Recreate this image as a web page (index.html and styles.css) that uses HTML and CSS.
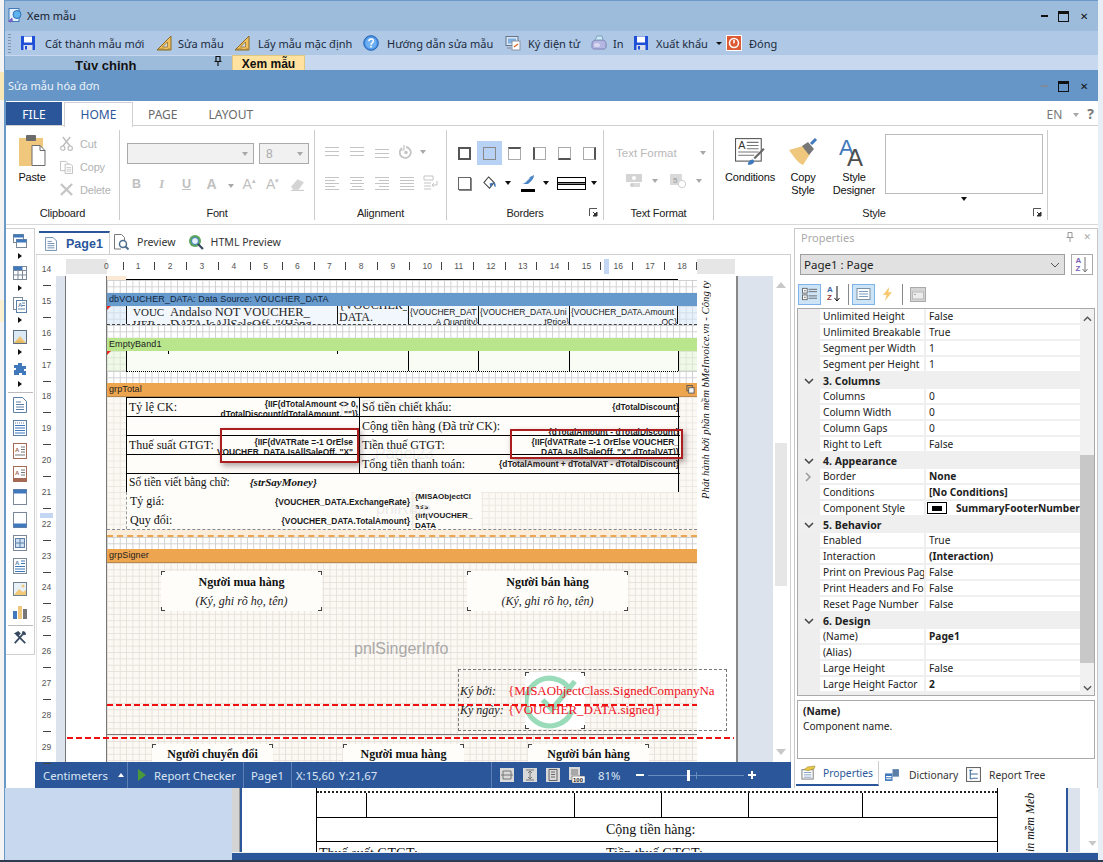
FILE: index.html
```html
<!DOCTYPE html>
<html lang="vi">
<head>
<meta charset="utf-8">
<title>Sửa mẫu hóa đơn</title>
<link rel="stylesheet" href="styles.css">
</head>
<body>
<svg class="defs" width="0" height="0" aria-hidden="true">
  <defs>
    <symbol id="i-save" viewBox="0 0 16 16"><rect x="1" y="1" width="14" height="14" fill="#1f4fd6"/><rect x="4" y="1.500" width="8" height="6" fill="#fff"/><rect x="3.500" y="10" width="9" height="5" fill="#d9dfe9"/><rect x="5" y="11" width="2" height="3.500" fill="#1f4fd6"/></symbol>
    <symbol id="i-ruler" viewBox="0 0 16 16"><path d="M15 1v14H1z" fill="#f0c060" stroke="#8a6a25"/><path d="M11.500 7v5H6.500z" fill="#cfdcec" stroke="#8a6a25" stroke-width=".7"/><path d="M3 15v-2M5 15v-2M7 15v-2M9 15v-1M11 15v-1M13 15v-2" stroke="#8a6a25" stroke-width=".7"/></symbol>
    <symbol id="i-help" viewBox="0 0 16 16"><circle cx="8" cy="8" r="7.300" fill="#4b93e6" stroke="#2565b4"/><circle cx="8" cy="8" r="5.500" fill="#6fb0f2"/><path d="M5.800 6.200c.2-3 4.600-3 4.600-.2 0 1.900-2.400 1.900-2.400 3.700" fill="none" stroke="#fff" stroke-width="1.500"/><rect x="7.200" y="10.800" width="1.600" height="1.700" fill="#fff"/></symbol>
    <symbol id="i-sign" viewBox="0 0 16 16"><rect x="1" y="1.500" width="12" height="9" fill="#dbe6f2" stroke="#63758c"/><rect x="3" y="3.500" width="8" height="5" fill="#7fb0e0"/><rect x="7" y="6" width="8" height="9" fill="#fff" stroke="#8794a6"/><path d="M9 12l4-3" stroke="#e06a2a" stroke-width="1.500"/><rect x="2" y="12" width="4" height="2" fill="#9aa8ba"/></symbol>
    <symbol id="i-print" viewBox="0 0 16 16"><path d="M1 9c0-3 2-4 5-4h5c3 0 4 2 4 4v3c0 1-1 2-2 2H3c-1 0-2-1-2-2z" fill="#b5b6e2" stroke="#7f82b5"/><path d="M4 5l2-4h5l1 4z" fill="#cdeaf7" stroke="#7f9ebd"/><ellipse cx="6" cy="10" rx="3" ry="2" fill="#d9d9f2"/></symbol>
    <symbol id="i-close" viewBox="0 0 16 16"><rect x=".5" y=".5" width="15" height="15" fill="#dc5a34" stroke="#fff"/><circle cx="8" cy="8" r="4.500" fill="none" stroke="#fff" stroke-width="1.500"/><rect x="7" y="4.500" width="2" height="4" fill="#fff" stroke="#dc5a34" stroke-width=".4"/></symbol>
    <symbol id="i-lines" viewBox="0 0 14 12"><path d="M0 1.500h14M0 5.500h14M0 9.500h14" stroke="#c4c4c4" stroke-width="1"/></symbol>
    <symbol id="i-left" viewBox="0 0 14 14"><path d="M0 1.500h14M0 4.500h10M0 7.500h14M0 10.500h10M0 13.500h14" stroke="#c4c4c4"/></symbol>
    <symbol id="i-center" viewBox="0 0 14 14"><path d="M0 1.500h14M2 4.500h10M0 7.500h14M2 10.500h10M0 13.500h14" stroke="#c4c4c4"/></symbol>
    <symbol id="i-right" viewBox="0 0 14 14"><path d="M0 1.500h14M4 4.500h10M0 7.500h14M4 10.500h10M0 13.500h14" stroke="#c4c4c4"/></symbol>
    <symbol id="i-just" viewBox="0 0 14 14"><path d="M0 1.500h14M0 4.500h14M0 7.500h14M0 10.500h14M0 13.500h14" stroke="#c4c4c4"/></symbol>
    <symbol id="i-doc" viewBox="0 0 14 16"><path d="M.5.500h9l4 4v11H.5z" fill="#fff" stroke="#5b7fa6"/><path d="M3 5h5M3 7.500h8M3 10h8M3 12.500h8" stroke="#5b7fa6"/></symbol>
    <symbol id="i-listdoc" viewBox="0 0 14 16"><rect x=".5" y=".5" width="13" height="15" fill="#fff" stroke="#5b7fa6"/><path d="M2 3h10" stroke="#5b7fa6" stroke-dasharray="1 1"/><path d="M2 5.500h10M2 8h10M2 10.500h10M2 13h10" stroke="#3f79bb"/></symbol>
    <symbol id="i-atext" viewBox="0 0 14 16"><rect x=".5" y=".5" width="13" height="15" fill="#fff" stroke="#a56a55"/><text x="2" y="9" class="svg-a">A</text><path d="M8 4h4M8 6.500h4M8 9h4M2 12h10" stroke="#777"/></symbol>
    <symbol id="i-atext2" viewBox="0 0 14 16"><rect x=".5" y=".5" width="13" height="15" fill="#fff" stroke="#a56a55"/><rect x="1" y="12" width="12" height="3.500" fill="#a56a55"/><text x="2" y="9" class="svg-a">A</text><path d="M8 4h4M8 6.500h4M8 9h4" stroke="#777"/></symbol>
    <symbol id="i-wintop" viewBox="0 0 14 16"><rect x=".5" y=".5" width="13" height="15" fill="#fff" stroke="#7a8898"/><rect x=".5" y=".5" width="13" height="4" fill="#3f79bb"/></symbol>
    <symbol id="i-winbot" viewBox="0 0 14 16"><rect x=".5" y=".5" width="13" height="15" fill="#fff" stroke="#7a8898"/><rect x=".5" y="11.500" width="13" height="4" fill="#3f79bb"/></symbol>
    <symbol id="i-image" viewBox="0 0 14 14"><rect x=".5" y=".5" width="13" height="13" fill="#e8f0f8" stroke="#6f7f8f"/><path d="M1 13l5-6 4 3 3-2v5z" fill="#f2c879"/><circle cx="10" cy="4" r="1.500" fill="#f2c879"/></symbol>
  </defs>
</svg>

<div class="edge edge-left"><span class="bit bit-a"></span><span class="bit bit-b"></span></div>
<div class="edge edge-right"></div>

<div class="win-back">
  <div class="back-title">
    <svg class="app-icon" viewBox="0 0 16 16"><rect x="2" y="1" width="10" height="13" fill="#e6f2fb" stroke="#3f79bb"/><circle cx="10" cy="7" r="4" fill="#5fb2ee" stroke="#2c6fb4"/><path d="M1 14l4-4 1 3-2 2z" fill="#7b5fc2"/></svg>
    <span class="back-name">Xem mẫu</span>
    <div class="win-btns"><span class="wb-min"></span><span class="wb-max"></span><span class="wb-x">✕</span></div>
  </div>
  <div class="back-tools">
    <span class="grip"></span>
    <svg class="t-ico"><use href="#i-save"/></svg><span class="t-lbl l-save">Cất thành mẫu mới</span>
    <svg class="t-ico"><use href="#i-ruler"/></svg><span class="t-lbl l-edit">Sửa mẫu</span>
    <svg class="t-ico"><use href="#i-ruler"/></svg><span class="t-lbl l-def">Lấy mẫu mặc định</span>
    <svg class="t-ico"><use href="#i-help"/></svg><span class="t-lbl l-help">Hướng dẫn sửa mẫu</span>
    <svg class="t-ico"><use href="#i-sign"/></svg><span class="t-lbl l-sign">Ký điện tử</span>
    <svg class="t-ico"><use href="#i-print"/></svg><span class="t-lbl l-print">In</span>
    <svg class="t-ico"><use href="#i-save"/></svg><span class="t-lbl l-exp">Xuất khẩu</span><span class="t-arrow"></span>
    <svg class="t-ico t-ico-close"><use href="#i-close"/></svg><span class="t-lbl l-close">Đóng</span>
  </div>
  <div class="back-tabs">
    <div class="side-head"><b>Tùy chỉnh</b>
      <svg class="pin" viewBox="0 0 8 10"><path d="M2 .5h4v5H2zM.5 5.500h7M4 6v4" fill="none" stroke="#111" stroke-width="1.200"/></svg>
    </div>
    <div class="tab-yellow">Xem mẫu</div>
  </div>
</div>

<div class="win-doc">
  <div class="doc-strip"></div>
  <div class="doc-sheet">
    <div class="doc-table">
      <div class="doc-r1"><span class="c1"></span><span class="c2"></span><span class="c3"></span><span class="c4"></span><span class="c5"></span></div>
      <div class="doc-r2"><span class="doc-gap"></span>Cộng tiền hàng:</div>
      <div class="doc-r3"><span class="doc-gap">Thuế suất GTGT:</span>Tiền thuế GTGT:</div>
    </div>
    <div class="doc-side">in mềm Meb</div>
  </div>
  <div class="doc-gutter"><svg class="doc-down" viewBox="0 0 10 6"><path d="M0 0h10L5 6z" fill="#c8c8c8"/></svg></div>
  <div class="doc-bar"></div>
</div>
<div class="taskbar"></div>

<div class="win-main">
  <div class="main-title">
    <span>Sửa mẫu hóa đơn</span>
    <div class="win-btns"><span class="wb-min wb-dim"></span><span class="wb-max"></span><span class="wb-x">✕</span></div>
  </div>

  <div class="rib-tabs">
    <span class="rt-file">FILE</span>
    <span class="rt-home">HOME</span>
    <span class="rt-page">PAGE</span>
    <span class="rt-layout">LAYOUT</span>
    <span class="rt-en">EN</span><span class="arrow-g rt-enarrow"></span><span class="rt-q">?</span>
  </div>

  <div class="ribbon">
    <section class="rg g-clip">
      <div class="rg-body rb-clip">
        <div class="paste">
          <svg class="paste-ico" viewBox="0 0 28 32"><rect x="1" y="4" width="24" height="28" fill="#efc77d"/><rect x="8" y="1" width="10" height="6" rx="1" fill="#6b6b6b"/><path d="M14 11.500h8l5 5v15H14z" fill="#fff" stroke="#6b6b6b"/><path d="M22 11.500v5h5" fill="none" stroke="#6b6b6b"/></svg>
          <span>Paste</span>
        </div>
        <div class="clip-col">
          <div class="clip-row"><svg class="clip-ico" viewBox="0 0 14 16"><path d="M3 1l8 10M11 1L3 11" stroke="#bdbdbd" stroke-width="1.600"/><circle cx="3" cy="13" r="2.300" fill="none" stroke="#bdbdbd" stroke-width="1.300"/><circle cx="11" cy="13" r="2.300" fill="none" stroke="#bdbdbd" stroke-width="1.300"/></svg>Cut</div>
          <div class="clip-row"><svg class="clip-ico" viewBox="0 0 14 16"><path d="M.5 2.500h6l2 2v8H.5z" fill="#fff" stroke="#bdbdbd"/><path d="M5.500 5.500h6l2 2v8h-8z" fill="#fff" stroke="#bdbdbd"/><path d="M7 9h5M7 11h5M7 13h5" stroke="#c8c8c8"/></svg>Copy</div>
          <div class="clip-row"><svg class="clip-ico" viewBox="0 0 14 16"><path d="M1 2l12 12M13 2L1 14" stroke="#c4c4c4" stroke-width="2.400"/></svg>Delete</div>
        </div>
      </div>
      <div class="rg-label">Clipboard</div>
    </section>

    <section class="rg g-font">
      <div class="rg-body rb-font">
        <div class="font-row1">
          <span class="combo combo-name"><span class="arrow-g"></span></span>
          <span class="combo combo-size"><em>8</em><span class="arrow-g"></span></span>
        </div>
        <div class="font-row2">
          <span class="fb fb-b">B</span><span class="fb fb-i">I</span><span class="fb fb-u">U</span><span class="fb fb-a">A</span>
          <span class="fb-arrow"><span class="arrow-g"></span></span>
          <span class="fb-grow">A<sup>▴</sup></span><span class="fb-shrink">A<sup>▾</sup></span>
          <svg class="eraser" viewBox="0 0 14 12"><path d="M1 8l6-7 6 3-5 7H3z" fill="#d4d4d4"/><path d="M1 11.500h12" stroke="#c8c8c8"/></svg>
        </div>
      </div>
      <div class="rg-label">Font</div>
    </section>

    <section class="rg g-align">
      <div class="rg-body rb-align">
        <div class="al-row al-row1">
          <svg class="al"><use href="#i-lines"/></svg><svg class="al"><use href="#i-lines"/></svg><svg class="al al-low"><use href="#i-lines"/></svg>
          <svg class="al-rot" viewBox="0 0 14 14"><path d="M3 3a5.500 5.500 0 1 0 4-1" fill="none" stroke="#c4c4c4" stroke-width="1.800"/><path d="M5 0v5H1" fill="none" stroke="#c4c4c4" stroke-width="1.200"/><circle cx="7" cy="7.500" r="1.800" fill="#c4c4c4"/></svg>
          <span class="arrow-g al-arrow"></span>
        </div>
        <div class="al-row">
          <svg class="al"><use href="#i-left"/></svg><svg class="al"><use href="#i-center"/></svg><svg class="al"><use href="#i-right"/></svg><svg class="al"><use href="#i-just"/></svg>
          <svg class="al-wrap" viewBox="0 0 16 16"><path d="M1 1h9v4H1zM1 8h7M1 11h7M1 14h7" fill="none" stroke="#c4c4c4"/><path d="M14 6v4H9m2-2l-2 2 2 2" fill="none" stroke="#c4c4c4"/></svg>
        </div>
      </div>
      <div class="rg-label">Alignment</div>
    </section>

    <section class="rg g-borders">
      <div class="rg-body rb-borders">
        <div class="bd-row">
          <span class="bd"><i class="bx bx-all"></i></span>
          <span class="bd bd-on"><i class="bx"></i></span>
          <span class="bd"><i class="bx bx-top"></i></span>
          <span class="bd"><i class="bx bx-left"></i></span>
          <span class="bd"><i class="bx bx-bottom"></i></span>
          <span class="bd"><i class="bx bx-right"></i></span>
        </div>
        <div class="bd-row">
          <span class="bd"><i class="bx bx-shadow"></i></span>
          <span class="bd"><svg class="bucket" viewBox="0 0 16 16"><path d="M7 1l6 6-5 6-6-6z" fill="#fff" stroke="#444" stroke-width="1.100"/><path d="M13 7c2 1 2 4 1 5-1-1-2-3-1-5z" fill="#3f79bb"/><path d="M8 8l4-1-3 5z" fill="#3f79bb"/></svg></span>
          <span class="mini-a"><span class="arrow-k"></span></span>
          <span class="pen"><svg class="pen-ico" viewBox="0 0 16 13"><path d="M1 9c3 0 5-2 9-7l4-2c0 3-2 6-6 9z" fill="#4b84c4"/><path d="M3 9l7-6" stroke="#fff" stroke-width=".6"/></svg><i class="pen-line"></i></span>
          <span class="mini-b"><span class="arrow-k"></span></span>
          <span class="line-style"><i></i></span>
          <span class="mini-c"><span class="arrow-k"></span></span>
        </div>
      </div>
      <div class="rg-label">Borders</div>
      <svg class="launch" viewBox="0 0 9 9"><path d="M.5 8V.5H8" fill="none" stroke="#555"/><path d="M4 4l4 4M8 4v4H4z" fill="#333" stroke="#333"/></svg>
    </section>

    <section class="rg g-tf">
      <div class="rg-body rb-tf">
        <div class="tf-row1"><span>Text Format</span><span class="arrow-g"></span></div>
        <div class="tf-row2">
          <svg class="tf-ico" viewBox="0 0 16 14"><rect x="0" y="0" width="16" height="8" fill="#d4d4d4"/><circle cx="8" cy="4" r="2" fill="#fff"/><path d="M5 10h9M5 12h9" stroke="#cfcfcf" stroke-width="1.400"/><circle cx="6" cy="11" r="2" fill="#cfcfcf"/></svg>
          <span class="arrow-g"></span>
          <svg class="tf-ico tf-ico2" viewBox="0 0 16 14"><rect x="0" y="0" width="12" height="11" fill="#dadada"/><text x="3" y="9" class="svg-five">5</text><circle cx="12" cy="10" r="3.700" fill="#fff" stroke="#cfcfcf"/></svg>
          <span class="arrow-g"></span>
        </div>
      </div>
      <div class="rg-label">Text Format</div>
    </section>

    <section class="rg g-style">
      <div class="rg-body rb-style">
        <div class="st st-cond">
          <svg class="st-ico" viewBox="0 0 28 26"><rect x=".5" y=".5" width="24" height="21" fill="#fff" stroke="#555"/><text x="3" y="10" class="svg-acap">A</text><path d="M11 4h11M11 7h11M11 10h11M3 13h19M3 16h15" stroke="#777"/><path d="M27 10l-9 9" stroke="#666" stroke-width="2"/><path d="M12 25c0-3 2-5 5-5l1 2c-1 2-3 3-6 3z" fill="#3f79bb"/></svg>
          <span>Conditions</span>
        </div>
        <div class="st st-copy">
          <svg class="st-ico" viewBox="0 0 30 28"><path d="M1 12l14-4 7 8-7 11C10 25 5 18 1 12z" fill="#efc77d"/><path d="M14 8l6-4 6 7-5 6z" fill="#777"/><path d="M23 6l5-5" stroke="#3f79bb" stroke-width="3"/></svg>
          <span>Copy<br>Style</span>
        </div>
        <div class="st st-des">
          <svg class="st-ico" viewBox="0 0 30 30"><text x="0" y="18" class="svg-a1">A</text><text x="8" y="29" class="svg-a2">A</text></svg>
          <span>Style<br>Designer</span>
        </div>
        <div class="gallery-wrap">
          <div class="gallery"></div>
          <span class="arrow-k gal-arrow"></span>
        </div>
      </div>
      <div class="rg-label">Style</div>
      <svg class="launch" viewBox="0 0 9 9"><path d="M.5 8V.5H8" fill="none" stroke="#555"/><path d="M4 4l4 4M8 4v4H4z" fill="#333" stroke="#333"/></svg>
    </section>
  </div>

  <div class="work">
    <aside class="toolbox">
      <svg class="tb-i" viewBox="0 0 14 16"><rect x=".5" y="1.500" width="10" height="8" fill="#fff" stroke="#7a8898"/><rect x=".5" y="1.500" width="10" height="3" fill="#3f79bb"/><rect x="3.500" y="6.500" width="10" height="8" fill="#fff" stroke="#7a8898"/><rect x="3.500" y="6.500" width="10" height="3" fill="#3f79bb"/></svg><span class="tb-a"></span>
      <svg class="tb-i" viewBox="0 0 14 16"><rect x=".5" y="1.500" width="13" height="13" fill="#fff" stroke="#7a8898"/><rect x=".5" y="1.500" width="9" height="4" fill="#3f79bb"/><path d="M5 5.500v9M9.500 5.500v9M1 10h12M1 5.500h12" stroke="#7a8898"/></svg><span class="tb-a"></span>
      <svg class="tb-i" viewBox="0 0 14 16"><rect x=".5" y=".5" width="9" height="12" fill="#fff" stroke="#7a8898"/><rect x="3.500" y="3.500" width="10" height="12" fill="#fff" stroke="#5b7fa6"/><text x="5" y="10" class="svg-b">A</text><path d="M9 6h3M9 8.500h3M5 12h7" stroke="#5b7fa6"/></svg><span class="tb-a"></span>
      <svg class="tb-i" viewBox="0 0 14 14"><rect x=".5" y=".5" width="13" height="13" fill="#dbe9f5" stroke="#5e6e7e"/><path d="M1 13l6-7 6 7z" fill="#eec77a"/><path d="M1 13l4-3 8 3z" fill="#e5b75f"/></svg><span class="tb-a"></span>
      <svg class="tb-i" viewBox="0 0 14 14"><path d="M5 1h4v3h4v3h-2v2h2v4H9v-2H6v2H1V8h2V6H1V3h4z" fill="#3f79bb"/></svg><span class="tb-a"></span>
      <i class="tb-sep"></i>
      <svg class="tb-i"><use href="#i-doc"/></svg>
      <svg class="tb-i"><use href="#i-listdoc"/></svg>
      <svg class="tb-i"><use href="#i-atext"/></svg>
      <svg class="tb-i"><use href="#i-atext2"/></svg>
      <svg class="tb-i"><use href="#i-wintop"/></svg>
      <svg class="tb-i"><use href="#i-winbot"/></svg>
      <svg class="tb-i" viewBox="0 0 14 16"><rect x=".5" y=".5" width="13" height="15" fill="#fff" stroke="#7a8898"/><rect x="2.500" y="3.500" width="9" height="9" fill="#cfe0f2" stroke="#5b7fa6"/><path d="M3 8h8M7 4v8" stroke="#5b7fa6"/></svg>
      <svg class="tb-i" viewBox="0 0 14 16"><rect x=".5" y=".5" width="13" height="15" fill="#fff" stroke="#7a8898"/><text x="2" y="7" class="svg-b">A</text><path d="M8 3h4M8 5.500h4M2 8.500h10M2 11h10M2 13.500h10" stroke="#3f79bb"/></svg>
      <svg class="tb-i"><use href="#i-image"/></svg>
      <svg class="tb-i" viewBox="0 0 14 14"><rect x="0" y="6" width="4" height="8" fill="#3f79bb"/><rect x="5" y="1" width="4" height="13" fill="#efc77d"/><rect x="10" y="4" width="4" height="10" fill="#777"/></svg>
      <i class="tb-sep tb-sep2"></i>
      <svg class="tb-i" viewBox="0 0 16 16"><path d="M2 15L11 5M14 15L4 5" stroke="#37495f" stroke-width="2"/><path d="M1 4l5-3 3 3-3 3zM11 1c2 0 4 2 4 4l-3 1-2-2z" fill="#37495f"/></svg>
    </aside>

    <div class="editor">
      <div class="pg-tabs">
        <span class="pg-active"><svg class="pg-ico"><use href="#i-doc"/></svg><b>Page1</b></span>
        <span class="pg-tab"><svg class="pg-ico2" viewBox="0 0 16 16"><path d="M1.500.5h7l3 3V9M1.500.5V15H8" fill="none" stroke="#777"/><circle cx="10" cy="10" r="3.500" fill="#fff" stroke="#4c6f8f" stroke-width="1.500"/><path d="M12.500 12.500l3 3" stroke="#4c6f8f" stroke-width="2"/></svg>Preview</span>
        <span class="pg-tab pg-tab2"><svg class="pg-ico2" viewBox="0 0 16 16"><circle cx="7" cy="7" r="6" fill="#58a55c"/><circle cx="7" cy="7" r="3.500" fill="#e5f1fa" stroke="#3f79bb"/><path d="M10 10l5 5" stroke="#37495f" stroke-width="2.200"/></svg>HTML Preview</span>
      </div>

      <div class="viewport">
        <div class="vruler">
          <span>14</span><span>15</span><span>16</span><span>17</span><span>18</span><span>19</span><span>20</span><span>21</span><span>22</span><span>23</span><span>24</span><span>25</span><span>26</span><span>27</span><span>28</span><span>29</span>
          <i class="vr-mark"></i>
        </div>
        <div class="hruler">
          <div class="hr-white">
            <span>0</span><span>1</span><span>2</span><span>3</span><span>4</span><span>5</span><span>6</span><span>7</span><span>8</span><span>9</span><span>10</span><span>11</span><span>12</span><span>13</span><span>14</span><span>15</span><span>16</span><span>17</span><span>18</span>
            <i class="hr-mark"></i>
          </div>
        </div>
        <div class="strip strip-l"></div>
        <div class="canvas">
          <div class="page">
            <div class="frag"></div>
            <div class="zone zone-13"></div>
            <div class="bandhead bh-blue">dbVOUCHER_DATA: Data Source: VOUCHER_DATA</div>
            <div class="data-band">
              <div class="dc dc1">VOUC<br>HER</div>
              <div class="dc dc2">Andalso NOT VOUCHER_<br>DATA.IsAllSaleOff, "(Hàng</div>
              <div class="dc dc3"><span class="dc3-in">{VOUCHER_<br>DATA.</span></div>
              <div class="dx dx1">{VOUCHER_DAT<br><span>A.Quantity}</span></div>
              <div class="dx dx2">{VOUCHER_DATA.Uni<br><span>tPrice}</span></div>
              <div class="dx dx3">{VOUCHER_DATA.Amount<br><span>OC}</span></div>
            </div>
            <div class="zone zone-13"></div>
            <div class="bandhead bh-green">EmptyBand1</div>
            <div class="empty-band">
              <i class="ev ev1"></i><i class="ev ev2"></i><i class="ev ev3"></i><i class="ev ev4"></i><i class="ev ev5"></i><i class="ev ev6"></i><i class="ev ev7"></i>
            </div>
            <div class="zone zone-12"></div>
            <div class="bandhead bh-orange">grpTotal
              <svg class="band-ico" viewBox="0 0 10 10"><rect x="1" y=".5" width="6" height="6" fill="none" stroke="#555"/><rect x="3" y="3" width="6" height="6" fill="#f4f4f4" stroke="#555"/></svg>
            </div>
            <div class="total-band">
              <div class="tbl">
                <span class="ghost gh1">pnlFixAmount</span>
                <span class="ghost gh2">Panel23</span>
                <div class="cell"><span class="lb">Tỷ lệ CK:</span><span class="ex ex-two">{IIF(dTotalAmount &lt;&gt; 0,<br>dTotalDiscount/dTotalAmount, "")}</span></div>
                <div class="cell"><span class="lb">Số tiền chiết khấu:</span><span class="ex">{dTotalDiscount}</span></div>
                <div class="cell"></div>
                <div class="cell"><span class="lb">Cộng tiền hàng (Đã trừ CK):</span><span class="ex ex-low">{dTotalAmount - dTotalDiscount}</span></div>
                <div class="cell"><span class="lb">Thuế suất GTGT:</span><span class="ex ex-two ex-vat">{IIF(dVATRate =-1 OrElse<br>VOUCHER_DATA.IsAllSaleOff, "X"</span></div>
                <div class="cell"><span class="lb">Tiền thuế GTGT:</span><span class="ex ex-two">{IIF(dVATRate =-1 OrElse VOUCHER_<br>DATA.IsAllSaleOff, "X",dTotalVAT)}</span></div>
                <div class="cell"></div>
                <div class="cell"><span class="lb">Tổng tiền thanh toán:</span><span class="ex">{dTotalAmount + dTotalVAT - dTotalDiscount}</span></div>
                <div class="cell cell-full"><span class="lb lb-small">Số tiền viết bằng chữ:</span><span class="say">{strSayMoney}</span></div>
              </div>
              <div class="side-note">Phát hành bởi phần mềm bMeInvoice.vn - Công ty</div>
            </div>
            <div class="lower-band">
              <div class="lower-col">
                <span class="ghost gh3">pnlRate</span>
                <div class="lower-row"><span class="lb">Tỷ giá:</span><span class="ex">{VOUCHER_DATA.ExchangeRate}</span></div>
                <div class="lower-row"><span class="lb">Quy đổi:</span><span class="ex">{VOUCHER_DATA.TotalAmount}</span></div>
              </div>
              <div class="lower-side">
                <div class="ls-cell">{MISAObjectCl<br>ass</div>
                <div class="ls-cell">{iif(VOUCHER_<br>DATA</div>
              </div>
            </div>
            <div class="lower-foot"></div>
            <div class="zone zone-12"></div>
            <div class="bandhead bh-orange">grpSigner</div>
            <div class="signer-band">
              <span class="pnl-name">pnlSingerInfo</span>
              <div class="sign-box sb1 corners"><b>Người mua hàng</b><i>(Ký, ghi rõ họ, tên)</i></div>
              <div class="sign-box sb2 corners"><b>Người bán hàng</b><i>(Ký, ghi rõ họ, tên)</i></div>
              <div class="low-box lb1 corners"><b>Người chuyển đổi</b></div>
              <div class="low-box lb2 corners"><b>Người mua hàng</b></div>
              <div class="low-box lb3 corners"><b>Người bán hàng</b></div>
            </div>
          </div>
          <div class="signed">
            <div class="signed-logo corners"><svg class="signed-mark" viewBox="0 0 54 54"><path d="M44 17A23 23 0 1 0 45 37" fill="none" stroke="#9adbba" stroke-width="5"/><path d="M17 26l9 9 22-27" fill="none" stroke="#9adbba" stroke-width="5"/></svg></div>
            <div class="signed-row"><i>Ký bởi:</i><span>{MISAObjectClass.SignedCompanyNa</span></div>
            <div class="signed-row"><i>Ký ngày:</i><span>{VOUCHER_DATA.signed}</span></div>
          </div>
          <i class="red-dash rd1"></i>
          <i class="red-dash rd2"></i>
          <i class="callout co1"></i>
          <i class="callout co2"></i>
        </div>
        <div class="strip strip-r"></div>
        <div class="vscroll">
          <svg class="vs-arrow" viewBox="0 0 10 6"><path d="M5 0l5 6H0z" fill="#c8c8c8"/></svg>
          <i class="vs-thumb"></i>
          <svg class="vs-arrow vs-down" viewBox="0 0 10 6"><path d="M0 0h10L5 6z" fill="#c8c8c8"/></svg>
        </div>
      </div>

      <div class="status">
        <span class="st-units">Centimeters</span><span class="st-up"></span><i class="st-sep sep1"></i>
        <svg class="st-play" viewBox="0 0 8 12"><path d="M0 0l8 6-8 6z" fill="#4a9a3a"/></svg>
        <span class="st-check">Report Checker</span><i class="st-sep sep2"></i>
        <span class="st-page">Page1</span><i class="st-sep sep3"></i>
        <span class="st-x">X:15,60</span><span class="st-y">Y:21,67</span>
        <i class="st-sep sep4"></i>
        <svg class="st-ico" viewBox="0 0 14 14"><rect width="14" height="14" fill="#d9d9d9"/><path d="M1 7h12M3 3h8v8H3z" fill="none" stroke="#777"/></svg>
        <svg class="st-ico" viewBox="0 0 14 14"><rect width="14" height="14" fill="#d9d9d9"/><path d="M3 2h8M3 12h8M7 3v8M5 5l2-2 2 2M5 9l2 2 2-2" fill="none" stroke="#777"/></svg>
        <svg class="st-ico" viewBox="0 0 14 14"><rect width="14" height="14" fill="#d9d9d9"/><path d="M3 1.500h8v11H3zM5 4h4M5 6.500h4M5 9h4" fill="none" stroke="#666"/></svg>
        <svg class="st-ico st-ico-100" viewBox="0 0 16 16"><rect x="0" y="0" width="11" height="13" fill="#d9d9d9"/><path d="M2 3h7M2 5h7M2 7h7" stroke="#777"/><rect x="3" y="9" width="13" height="7" fill="#fff" stroke="#555" stroke-width=".6"/><text x="4" y="15" class="svg-100">100</text></svg>
        <span class="st-zoom">81%</span>
        <span class="st-minus"></span>
        <span class="st-slider"><i class="st-mid"></i><i class="st-thumb"></i></span>
        <span class="st-plus"></span>
      </div>
    </div>

    <aside class="props">
      <div class="pr-head"><span>Properties</span>
        <svg class="pr-pin" viewBox="0 0 8 10"><path d="M2 .5h4v5H2zM.5 5.500h7M4 6v4" fill="none" stroke="#999" stroke-width="1"/></svg>
        <span class="pr-x">✕</span>
      </div>
      <div class="pr-combo">
        <div class="pr-select"><span>Page1 : Page</span><svg class="pr-chev" viewBox="0 0 10 6"><path d="M1 1l4 4 4-4" fill="none" stroke="#555"/></svg></div>
        <div class="pr-sortbtn"><span class="az"><em>A</em><em>Z</em></span><svg class="az-arrow" viewBox="0 0 6 16"><path d="M3 0v15M.5 12L3 15l2.500-3" fill="none" stroke="#777"/></svg></div>
      </div>
      <div class="pr-tools">
        <span class="pt pt-on"><svg class="pt-ico" viewBox="0 0 16 14"><rect x=".5" y="1" width="5" height="5" fill="#fff" stroke="#666"/><rect x=".5" y="8" width="5" height="5" fill="#fff" stroke="#666"/><path d="M2 3.500h2M2 10.500h2M7 2h9M7 4.500h9M7 9h9M7 11.500h9" stroke="#666"/></svg></span>
        <span class="pt"><span class="az az2"><em>A</em><em>Z</em></span><svg class="az-arrow az-k" viewBox="0 0 6 16"><path d="M3 0v15M.5 12L3 15l2.500-3" fill="none" stroke="#111"/></svg></span>
        <i class="pt-sep"></i>
        <span class="pt pt-on"><svg class="pt-ico" viewBox="0 0 14 14"><rect x=".5" y="1.500" width="13" height="11" fill="#fff" stroke="#7d8fa3"/><path d="M2.500 4.500h9M2.500 7h9M2.500 9.500h9" stroke="#7d9dc0"/></svg></span>
        <span class="pt"><svg class="pt-ico" viewBox="0 0 12 16"><path d="M8 0L1 9h4L3 16l8-10H7z" fill="#f8c86e"/></svg></span>
        <i class="pt-sep"></i>
        <span class="pt"><svg class="pt-ico pt-wide" viewBox="0 0 16 16"><rect x=".5" y="1.500" width="15" height="14" fill="#d4d4d4" stroke="#aaa"/><rect x="2.500" y="6" width="11" height="7" fill="#ececec" stroke="#bbb"/><path d="M4 8.500h2" stroke="#aaa"/></svg></span>
      </div>

      <div class="pr-grid">
        <div class="pr-rows">
          <div class="row"><span class="n">Unlimited Height</span><span class="v">False</span></div>
          <div class="row"><span class="n">Unlimited Breakable</span><span class="v">True</span></div>
          <div class="row"><span class="n">Segment per Width</span><span class="v">1</span></div>
          <div class="row"><span class="n">Segment per Height</span><span class="v">1</span></div>
          <div class="cat"><svg class="chev" viewBox="0 0 10 6"><path d="M1 1l4 4 4-4" fill="none" stroke="#444" stroke-width="1.500"/></svg>3. Columns</div>
          <div class="row"><span class="n">Columns</span><span class="v">0</span></div>
          <div class="row"><span class="n">Column Width</span><span class="v">0</span></div>
          <div class="row"><span class="n">Column Gaps</span><span class="v">0</span></div>
          <div class="row"><span class="n">Right to Left</span><span class="v">False</span></div>
          <div class="cat"><svg class="chev" viewBox="0 0 10 6"><path d="M1 1l4 4 4-4" fill="none" stroke="#444" stroke-width="1.500"/></svg>4. Appearance</div>
          <div class="row row-exp"><svg class="chev-r" viewBox="0 0 6 10"><path d="M1 1l4 4-4 4" fill="none" stroke="#999" stroke-width="1.500"/></svg><span class="n">Border</span><span class="v vb">None</span></div>
          <div class="row"><span class="n">Conditions</span><span class="v vb">[No Conditions]</span></div>
          <div class="row"><span class="n">Component Style</span><span class="v vb v-style"><i class="swatch"></i>SummaryFooterNumber</span></div>
          <div class="cat"><svg class="chev" viewBox="0 0 10 6"><path d="M1 1l4 4 4-4" fill="none" stroke="#444" stroke-width="1.500"/></svg>5. Behavior</div>
          <div class="row"><span class="n">Enabled</span><span class="v">True</span></div>
          <div class="row"><span class="n">Interaction</span><span class="v vb">(Interaction)</span></div>
          <div class="row"><span class="n">Print on Previous Page</span><span class="v">False</span></div>
          <div class="row"><span class="n">Print Headers and Footers</span><span class="v">False</span></div>
          <div class="row"><span class="n">Reset Page Number</span><span class="v">False</span></div>
          <div class="cat"><svg class="chev" viewBox="0 0 10 6"><path d="M1 1l4 4 4-4" fill="none" stroke="#444" stroke-width="1.500"/></svg>6. Design</div>
          <div class="row"><span class="n">(Name)</span><span class="v vb">Page1</span></div>
          <div class="row"><span class="n">(Alias)</span><span class="v"></span></div>
          <div class="row"><span class="n">Large Height</span><span class="v">False</span></div>
          <div class="row"><span class="n">Large Height Factor</span><span class="v vb">2</span></div>
        </div>
        <div class="pr-scroll">
          <svg class="ps-chev" viewBox="0 0 10 6"><path d="M1 5l4-4 4 4" fill="none" stroke="#555" stroke-width="1.500"/></svg>
          <i class="ps-thumb"></i>
          <svg class="ps-chev ps-down" viewBox="0 0 10 6"><path d="M1 1l4 4 4-4" fill="none" stroke="#555" stroke-width="1.500"/></svg>
        </div>
      </div>

      <div class="pr-desc"><b>(Name)</b><span>Component name.</span></div>

      <div class="pr-tabs">
        <span class="prt prt-on"><svg class="prt-ico" viewBox="0 0 16 16"><rect x="1" y="5" width="12" height="10" fill="#fff" stroke="#777"/><path d="M3 8h8M3 10.500h8M3 13h8" stroke="#7d9dc0"/><path d="M3 5l4-3 8-1-1 3-6 2z" fill="#e7c545" stroke="#8a7a25" stroke-width=".5"/></svg>Properties</span>
        <span class="prt prt-dict"><svg class="prt-ico" viewBox="0 0 14 12"><rect x="0" y="5" width="7" height="7" fill="#3f79bb"/><rect x="7" y="1" width="6" height="7" fill="#5b7fa6"/><path d="M1 8h5M1 10h5" stroke="#fff"/></svg>Dictionary</span>
        <span class="prt prt-tree"><svg class="prt-ico" viewBox="0 0 14 14"><rect x=".5" y=".5" width="13" height="13" fill="#fff" stroke="#666"/><path d="M3 3h3M6 6.500h5M6 10.500h5M4 3v8h2M4 6.500h2" fill="none" stroke="#3c6d9c"/></svg>Report Tree</span>
      </div>
    </aside>
  </div>
</div>
</body>
</html>
```
FILE: styles.css
```css
* { box-sizing: border-box; }
html, body { margin: 0; padding: 0; }
body {
  position: relative;
  width: 1103px;
  height: 862px;
  overflow: hidden;
  background: #c8d9ef;
  font-family: "Liberation Sans", Arial, sans-serif;
  font-size: 11px;
  color: #111;
}
.defs { position: absolute; }
.svg-a { font: bold 6px "Liberation Sans", sans-serif; fill: #a56a55; }
.svg-b { font: bold 6px "Liberation Sans", sans-serif; fill: #5b7fa6; }
.svg-acap { font: 10px "Liberation Sans", sans-serif; fill: #333; }
.svg-five { font: bold 8px "Liberation Sans", sans-serif; fill: #aaa; }
.svg-a1 { font: 22px "Liberation Sans", sans-serif; fill: #3f79bb; }
.svg-a2 { font: 24px "Liberation Sans", sans-serif; fill: #4d4d4d; }
.svg-100 { font: bold 6px "Liberation Sans", sans-serif; fill: #222; }

/* desktop edges */
.edge { position: absolute; top: 0; height: 862px; }
.edge-left { left: 0; width: 5px; background: #f4f4f4; border-right: 1px solid #6a99c8; }
.edge-right { left: 1098px; width: 5px; background: #e8eef6; }
.bit { display: block; position: absolute; left: 0; width: 4px; }
.bit-a { top: 72px; height: 28px; background: #f8e8b8; }
.bit-b { top: 300px; height: 22px; background: #fbf0d0; }

/* back window */
.win-back { position: absolute; left: 5px; top: 0; width: 1093px; height: 70px; background: #9dbbdb; border-top: 1px solid #6a99c8; }
.back-title { height: 30px; display: flex; align-items: center; padding: 0 0 2px 2px; position: relative; }
.app-icon { width: 16px; height: 17px; }
.back-name { margin-left: 4px; font: 11px "Noto Sans", sans-serif; color: #14202e; }
.win-btns { position: absolute; left: 1033px; top: 7px; width: 56px; height: 16px; display: flex; align-items: center; }
.wb-min { width: 7px; height: 2px; background: #111; margin-left: 3px; }
.wb-dim { background: #7f8b99; }
.wb-max { width: 11px; height: 11px; border: 1px solid #111; border-top-width: 3px; margin-left: 10px; }
.wb-x { margin-left: 11px; font: bold 10px "DejaVu Sans", sans-serif; color: #111; }

.back-tools { height: 24px; background: #aec8e6; display: flex; align-items: center; font: 11px "Noto Sans", sans-serif; color: #1b2a3c; padding-left: 3px; }
.grip { width: 3px; height: 20px; margin-right: 9px; background-image: radial-gradient(#7f93ab 45%, transparent 50%); background-size: 2px 3px; }
.t-ico { width: 16px; height: 16px; flex: none; }
.t-lbl { white-space: nowrap; flex: none; }
.l-save { margin: 0 11px 0 9px; width: 100px; }
.l-edit { margin: 0 11px 0 6px; width: 45px; }
.l-def { margin: 0 10px 0 8px; width: 95px; }
.l-help { margin: 0 11px 0 8px; width: 107px; }
.l-sign { margin: 0 10px 0 7px; width: 53px; }
.l-print { margin: 0 12px 0 6px; width: 8px; }
.l-exp { margin: 0 6px 0 7px; width: 54px; }
.l-close { margin-left: 7px; }
.t-arrow { width: 0; height: 0; border: 3px solid transparent; border-top: 3px solid #111; margin-top: 3px; }
.t-ico-close { margin-left: 4px; }

.back-tabs { height: 15px; display: flex; background: #c8d9ef; overflow: hidden; }
.side-head { width: 227px; background: #9dbbdb; display: flex; align-items: flex-start; font-size: 13px; padding-left: 70px; line-height: 19px; margin-top: 1px; position: relative; }
.side-head b { color: #111; }
.pin { width: 8px; height: 10px; margin: 0 0 0 78px; }
.tab-yellow { width: 73px; height: 15px; background: #ffe29f; border: 1px solid #e0c880; border-bottom: 0; font-weight: bold; font-size: 12px; line-height: 17px; text-align: center; }

/* document behind */
.win-doc { position: absolute; left: 232px; top: 788px; width: 866px; height: 72px; background: #fff; display: flex; }
.doc-strip { width: 8px; height: 64px; background: #d4d4d4; border-right: 1px solid #999; }
.doc-sheet { width: 828px; height: 64px; border-left: 2px solid #2b579a; border-right: 2px solid #2b579a; position: relative; overflow: hidden; }
.doc-table { position: absolute; left: 74px; top: 0; width: 682px; height: 64px; border-left: 1px solid #000; border-right: 1px solid #000; }
.doc-r1 { height: 27px; border-top: 2px dotted #222; margin-top: 3px; border-bottom: 1px solid #000; position: relative; }
.doc-r1 span { position: absolute; top: 0; width: 1px; height: 24px; background: #000; }
.doc-r1 .c1 { left: 49px; } .doc-r1 .c2 { left: 257px; } .doc-r1 .c3 { left: 344px; } .doc-r1 .c4 { left: 431px; } .doc-r1 .c5 { left: 545px; }
.doc-r2, .doc-r3 { display: flex; font-family: "Liberation Serif", serif; font-size: 14px; padding-left: 2px; }
.doc-r2 { height: 24px; line-height: 24px; border-bottom: 1px solid #000; }
.doc-r3 { height: 24px; line-height: 24px; }
.doc-gap { width: 287px; flex: none; }
.doc-side { position: absolute; left: 781px; top: 0; height: 64px; writing-mode: vertical-rl; transform: rotate(180deg); font: italic 12px "Liberation Serif", serif; text-align: left; white-space: nowrap; overflow: hidden; }
.doc-gutter { width: 30px; height: 64px; background: linear-gradient(90deg, #dde3ec 0 12px, #fff 12px); position: relative; }
.doc-down { position: absolute; left: 20px; top: 53px; width: 9px; height: 5px; }
.doc-bar { position: absolute; left: 0; top: 64px; width: 866px; height: 8px; background: #2b579a; border-top: 1px solid #eee; }
.taskbar { position: absolute; left: 0; top: 860px; width: 1103px; height: 2px; background: #303a52; }

/* main window */
.win-main { position: absolute; left: 5px; top: 70px; width: 1093px; height: 718px; background: #c8d9ef; border-left: 1px solid #6a99c8; }
.main-title { height: 31px; background: #6596c7; display: flex; align-items: center; padding-left: 2px; font: 11px "Noto Sans", sans-serif; color: #eef3f9; position: relative; }
.main-title .win-btns { left: 1032px; top: 8px; }
.rib-tabs { height: 25px; background: #fff; border-bottom: 1px solid #d0d0d0; display: flex; align-items: stretch; position: relative; font: 12px "Noto Sans", sans-serif; }
.rt-file { width: 56px; margin-top: 1px; background: #2b579a; color: #fff; text-align: center; line-height: 26px; }
.rt-home { width: 69px; margin-left: 2px; height: 25px; margin-top: 1px; background: #fff; border: 1px solid #d0d0d0; border-bottom: 0; color: #2b579a; text-align: center; line-height: 24px; }
.rt-page { margin-left: 15px; color: #6a6a6a; line-height: 27px; }
.rt-layout { margin-left: 31px; color: #6a6a6a; line-height: 27px; }
.rt-en { margin-left: auto; color: #777; line-height: 27px; }
.rt-enarrow { align-self: center; margin-left: 11px; margin-top: 3px; }
.rt-q { margin: 0 4px 0 8px; font-weight: bold; color: #777; line-height: 26px; font-size: 14px; }
.arrow-g { display: inline-block; width: 0; height: 0; border: 3.500px solid transparent; border-top: 4px solid #a8a8a8; border-bottom: 0; }
.arrow-k { display: inline-block; width: 0; height: 0; border: 3.500px solid transparent; border-top: 4px solid #111; border-bottom: 0; }

.ribbon { height: 99px; background: #fff; border-bottom: 1px solid #d8d8d8; display: flex; padding-top: 4px; align-items: flex-start; font-size: 11px; letter-spacing: -.2px; }
.rg { height: 90px; border-right: 1px solid #ccc; display: flex; flex-direction: column; position: relative; flex: none; }
.g-clip { width: 114px; } .g-font { width: 195px; } .g-align { width: 132px; } .g-borders { width: 157px; } .g-tf { width: 110px; } .g-style { width: 334px; }
.rg-body { height: 76px; flex: none; }
.rg-label { text-align: center; font-size: 11px; line-height: 14px; color: #222; }
.g-style .rg-label { padding-right: 13px; }
.launch { position: absolute; right: 5px; bottom: 3px; width: 9px; height: 9px; }

.rb-clip { display: flex; }
.paste { width: 40px; margin-left: 6px; display: flex; flex-direction: column; align-items: center; padding-top: 4px; }
.paste-ico { width: 28px; height: 32px; margin-bottom: 5px; }
.clip-col { margin-left: 8px; padding-top: 2px; }
.clip-row { height: 23px; display: flex; align-items: center; color: #b2b2b2; }
.clip-ico { width: 13px; height: 15px; margin-right: 7px; }

.rb-font { padding: 13px 0 0 7px; }
.font-row1 { display: flex; gap: 5px; }
.combo { height: 21px; background: #f1f1f1; border: 1px solid #aaa; display: flex; align-items: center; justify-content: flex-end; padding-right: 5px; position: relative; }
.combo-name { width: 127px; }
.combo-size { width: 50px; justify-content: space-between; padding-left: 6px; }
.combo-size em { font-style: normal; font-size: 12px; color: #aaa; }
.font-row2 { display: flex; align-items: center; margin: 10px 0 0 -3px; height: 20px; color: #c0c0c0; font-size: 12.500px; }
.fb { width: 25px; text-align: center; }
.fb-b, .fb-a { font-weight: bold; }
.fb-i { font-style: italic; font-family: "Liberation Serif", serif; font-weight: bold; }
.fb-u { text-decoration: underline; font-weight: bold; }
.fb-a { font-size: 14px; }
.fb-arrow { width: 14px; text-align: center; }
.fb-grow { width: 22px; text-align: center; font-size: 14px; }
.fb-shrink { width: 25px; text-align: center; font-size: 14px; }
.font-row2 sup { font-size: 7px; vertical-align: 6px; line-height: 0; }
.eraser { width: 15px; height: 13px; margin-left: 5px; }

.rb-align { padding: 12px 0 0 4px; }
.al-row { display: flex; align-items: center; height: 20px; }
.al-row1 { margin-bottom: 11px; }
.al { width: 14px; height: 14px; margin: 0 5.500px; flex: none; }
.al-low { transform: translateY(2px); }
.al-rot { width: 14px; height: 14px; margin-left: 5px; }
.al-arrow { margin-left: 7px; }
.al-wrap { width: 16px; height: 16px; margin-left: 4px; }

.rb-borders { padding: 11px 0 0 5px; }
.bd-row { display: flex; align-items: center; height: 24px; margin-bottom: 6px; }
.bd { width: 25px; height: 24px; display: flex; align-items: center; justify-content: center; flex: none; }
.bd-on { background: #b7d2f5; }
.bx { display: block; width: 13px; height: 13px; border: 1px solid #aaa; }
.bx-all { border: 2px solid #555; }
.bd-on .bx { border: 1px solid #888; }
.bx-top { border-top: 2px solid #555; }
.bx-left { border-left: 2px solid #555; }
.bx-bottom { border-bottom: 2px solid #555; }
.bx-right { border-right: 2px solid #555; }
.bx-shadow { border: 1px solid #666; box-shadow: 1px 1px 0 #888; }
.bucket { width: 15px; height: 15px; }
.mini-a { width: 12px; text-align: center; line-height: 0; }
.pen { width: 28px; display: flex; flex-direction: column; align-items: center; }
.pen-ico { width: 16px; height: 13px; }
.pen-line { display: block; width: 14px; height: 3px; background: #000; margin-top: 1px; }
.mini-b { width: 8px; text-align: center; line-height: 0; }
.line-style { width: 29px; height: 13px; margin-left: 7px; border: 1px solid #000; display: flex; align-items: center; }
.line-style i { display: block; width: 100%; height: 3px; border-top: 1px solid #000; border-bottom: 1px solid #000; background: #888; }
.mini-c { width: 14px; text-align: center; line-height: 0; margin-left: 1px; }

.rb-tf { padding: 17px 0 0 12px; color: #b8b8b8; font-size: 11.500px; letter-spacing: 0; }
.tf-row1 { display: flex; align-items: center; justify-content: space-between; padding-right: 7px; }
.tf-row2 { display: flex; align-items: center; margin: 15px 0 0 10px; gap: 10px; }
.tf-ico { width: 16px; height: 14px; }
.tf-ico2 { margin-left: 2px; }

.rb-style { display: flex; padding-left: 8px; }
.st { display: flex; flex-direction: column; align-items: center; text-align: center; line-height: 13px; padding-top: 7px; flex: none; }
.st-cond { width: 56px; }
.st-copy { width: 50px; }
.st-des { width: 52px; }
.st-ico { width: 30px; height: 30px; margin-bottom: 4px; }
.gallery-wrap { margin: 4px 0 0 5px; width: 158px; text-align: center; line-height: 0; }
.gallery { height: 60px; border: 1px solid #bbb; margin-bottom: 3px; }

/* work area */
.work { display: flex; height: 563px; background: #fff; }
.toolbox { width: 29px; height: 427px; margin-top: 3px; background: #fff; border: 1px solid #d0d0d0; border-left: 0; display: flex; flex-direction: column; align-items: center; flex: none; padding-top: 4px; }
.tb-i { width: 14px; height: 16px; flex: none; margin-bottom: 7px; }
.tb-a { width: 0; height: 0; border: 3.500px solid transparent; border-left: 4px solid #111; border-right: 0; margin: -3px 0 6px; flex: none; }
.tb-sep { display: block; width: 25px; height: 1px; background: #bbb; margin: -1px 0 4px; flex: none; }
.tb-sep2 { margin: -2px 0 3px; }

.editor { width: 755px; margin-left: 1px; flex: none; display: flex; flex-direction: column; }
.pg-tabs { height: 30px; padding: 6px 0 0 3px; display: flex; align-items: stretch; border-bottom: 1px solid #d0d0d0; font: 10.600px "Noto Sans", sans-serif; color: #333; }
.pg-active { width: 71px; border-top: 2px solid #2b579a; border-right: 1px solid #d0d0d0; display: flex; align-items: center; padding-left: 6px; gap: 9px; background: #fff; font-family: "Liberation Sans", sans-serif; }
.pg-active b { color: #2b579a; font-size: 12.500px; }
.pg-ico { width: 12px; height: 14px; }
.pg-tab { display: flex; align-items: center; gap: 8px; margin-left: 3px; padding-bottom: 2px; }
.pg-tab2 { margin-left: 12px; gap: 7px; }
.pg-ico2 { width: 16px; height: 16px; }

.viewport { height: 507px; border-right: 1px solid #d0d0d0; border-left: 1px solid #e4e4e4; background: #fff; display: grid; grid-template-columns: 13px 3px 10px 669px 38px 2px 12px; grid-template-rows: 15px 2px 486px; padding: 4px 0 0 3px; }
.vruler { grid-column: 1; grid-row: 1 / 4; position: relative; background: #fff; padding-top: 3px; font-size: 8.500px; color: #555; text-align: center; }
.vruler span { display: block; height: 31.850px; line-height: 15px; position: relative; }
.vruler span::after { content: ""; position: absolute; left: 3px; top: 23px; width: 8px; height: 1px; background: #444; }
.vr-mark { position: absolute; left: 0; top: 254px; width: 13px; height: 5px; background: #c3d7f4; }
.hruler { grid-column: 4 / 6; grid-row: 1; width: 669px; background: #e6e6e6; padding-left: 41px; }
.hr-white { width: 590px; height: 15px; background: #fff; display: flex; position: relative; font-size: 8.500px; color: #555; }
.hr-white span { width: 31.850px; flex: none; line-height: 15px; position: relative; padding-left: 0; text-indent: -3px; }
.hr-white span::after { content: ""; position: absolute; left: 15.500px; top: 3px; width: 1px; height: 8px; background: #444; }
.hr-mark { position: absolute; left: 497px; top: 0; width: 5px; height: 15px; background: #c3d7f4; }
.strip { background: #dde3ec; grid-row: 3; }
.strip-l { grid-column: 3; border-right: 1px solid #777; }
.strip-r { grid-column: 5; border-left: 2px solid #888; margin-left: 1px; }
.canvas { grid-column: 4; grid-row: 3; position: relative; overflow: hidden; background: #fff; width: 669px; height: 486px; z-index: 1; }
.vscroll { grid-column: 7; grid-row: 1 / 4; position: relative; }
.vs-arrow { position: absolute; left: 1px; top: 23px; width: 10px; height: 6px; }
.vs-down { top: 490px; }
.vs-thumb { position: absolute; left: 0; top: 184px; width: 12px; height: 143px; background: #e6e6e6; }

/* report page */
.page { margin-left: 40px; width: 591px; border-left: 1px solid #777; font-size: 10px; }
.frag { height: 4px; border-bottom: 1px solid #000; margin-left: 19px; margin-right: 19px; position: relative; }
.frag::before { content: ""; position: absolute; left: -19px; top: 0; width: 19px; height: 4px; background: #fce9d4; }
.zone { background-color: #fff; background-image: linear-gradient(#cfcfcf 1px, transparent 1px), linear-gradient(90deg, #cfcfcf 1px, transparent 1px); background-size: 6.370px 6.370px; }
.zone-13 { height: 13px; }
.zone-12 { height: 12px; }
.bandhead { height: 13px; line-height: 13px; padding-left: 2px; font-size: 9px; color: #222; position: relative; letter-spacing: .1px; }
.bh-blue { background: #6699cc; color: #14263b; }
.bh-green { background: #b9e68d; }
.bh-orange { background: #eea54f; border-bottom: 1px solid #b9884a; height: 14px; }
.band-ico { position: absolute; right: 2px; top: 2px; width: 9px; height: 9px; }
.data-band { height: 19px; position: relative; overflow: hidden; background-color: #e7f1fb; background-image: linear-gradient(#d3dce6 1px, transparent 1px), linear-gradient(90deg, #d3dce6 1px, transparent 1px); background-size: 6.370px 6.370px; border-bottom: 1px dashed #444; }
.data-band::before { content: ""; position: absolute; left: 0; top: 0; width: 0; height: 0; border: 2px solid #e22; border-right-color: transparent; border-bottom-color: transparent; }
.dc, .dx { position: absolute; top: 0; height: 19px; overflow: hidden; border-left: 1px solid #111; background: #f1f7fc; }
.dc { font: 11px/12px "Liberation Serif", serif; color: #222; }
.dx { font: 8.500px/10px "Liberation Sans", sans-serif; color: #222; padding: 1px 0 0 1px; text-align: left; }
.dx span { display: block; text-align: right; }
.dc1 { left: 19px; width: 42px; padding-left: 6px; }
.dc2 { left: 61px; width: 169px; padding-left: 2px; border-left: 0; font-size: 12.500px; white-space: nowrap; }
.dc3 { left: 230px; width: 70px; padding-left: 1px; font-size: 12px; }
.dc3-in { display: block; margin-top: -7px; }
.dx1 { left: 301px; width: 70px; }
.dx2 { left: 371px; width: 91px; }
.dx3 { left: 462px; width: 109px; border-right: 1px solid #111; }
.empty-band { height: 20px; position: relative; background-color: #f0f9e7; background-image: linear-gradient(#dce4d2 1px, transparent 1px), linear-gradient(90deg, #dce4d2 1px, transparent 1px); background-size: 6.370px 6.370px; }
.empty-band::before { content: ""; position: absolute; left: 19px; right: 19px; top: 0; height: 20px; background: #f9fcf5; border-bottom: 1px dotted #000; }
.empty-band::after { content: ""; position: absolute; left: 0; top: 0; width: 0; height: 0; border: 2px solid #e22; border-right-color: transparent; border-bottom-color: transparent; }
.ev { position: absolute; top: 0; width: 1px; height: 20px; background: #000; z-index: 1; }
.ev1 { left: 19px; } .ev2 { left: 61px; height: 3px; } .ev3 { left: 230px; height: 3px; } .ev4 { left: 301px; } .ev5 { left: 371px; } .ev6 { left: 462px; } .ev7 { left: 571px; }

.total-band { height: 95px; position: relative; background-color: #fcf8f3; background-image: linear-gradient(#ebe7e1 1px, transparent 1px), linear-gradient(90deg, #ebe7e1 1px, transparent 1px); background-size: 6.370px 6.370px; }
.tbl { position: absolute; left: 19px; top: 0; z-index: 0; width: 553px; display: grid; grid-template-columns: 233px 320px; grid-auto-rows: 19px; background: #fffdfa; border: 1px solid #000; height: 96px; }
.cell { display: flex; justify-content: space-between; align-items: center; overflow: hidden; border-bottom: 1px solid #000; padding: 0 1px 0 2px; white-space: nowrap; position: relative; z-index: 1; }
.cell:nth-of-type(odd) { border-right: 1px solid #000; }
.cell:nth-of-type(n+9) { border-bottom: 0; }
.cell-full { grid-column: 1 / 3; justify-content: flex-start; border-right: 0 !important; padding-bottom: 3px; }
.lb { font: 12px "Liberation Serif", serif; color: #111; flex: none; }
.lb-small { font-size: 11.500px; }
.ex { font: bold 8.400px/10px "Liberation Sans", sans-serif; text-align: right; color: #1a1a1a; margin-left: auto; }
.ex-two { align-self: flex-start; padding-top: 1px; }
.ex-vat { padding-right: 5px; }
.ex-low { align-self: flex-end; margin-bottom: -2px; }
.say { font: italic bold 11px "Liberation Serif", serif; margin-left: 20px; }
.ghost { position: absolute; font-size: 16px; color: #ebebeb; white-space: nowrap; z-index: 0; }
.gh1 { left: 213px; top: 0; }
.gh2 { left: 248px; top: 47px; }
.gh3 { left: 249px; top: 8px; }
.side-note { position: absolute; left: 590px; top: -120px; height: 222px; width: 16px; writing-mode: vertical-rl; transform: rotate(180deg); font: italic 10.800px/16px "Liberation Serif", serif; white-space: nowrap; color: #111; overflow: hidden; text-align: left; z-index: 2; }

.lower-band { height: 38px; position: relative; background-color: #fcf8f3; background-image: linear-gradient(#ebe7e1 1px, transparent 1px), linear-gradient(90deg, #ebe7e1 1px, transparent 1px); background-size: 6.370px 6.370px; border-bottom: 1px dashed #888; display: flex; padding-left: 19px; }
.lower-col { width: 285px; background: #fffdfa; border-left: 1px dashed #999; position: relative; }
.lower-row { display: flex; align-items: center; height: 19px; padding: 0 1px 0 3px; overflow: hidden; position: relative; }
.lower-side { width: 66px; margin-left: 4px; background: #fffdfa; }
.ls-cell { height: 19px; font: bold 8px/10px "Liberation Sans", sans-serif; overflow: hidden; color: #1a1a1a; }
.lower-foot { height: 7px; background: #fcecda; border-bottom: 2px dashed #eea54f; }
.signer-band { height: 200px; position: relative; background-color: #fcf8f3; background-image: linear-gradient(#e6e1da 1px, transparent 1px), linear-gradient(90deg, #e6e1da 1px, transparent 1px); background-size: 6.370px 6.370px; }
.signer-band::after { content: ""; position: absolute; left: 0; top: 171px; width: 590px; height: 1px; background: #777; }
.pnl-name { position: absolute; left: 247px; top: 77px; font-size: 16px; color: #a9a9a9; }
.corners {
  --c: #444;
  background-color: #fffdfa;
  background-image:
    linear-gradient(var(--c), var(--c)), linear-gradient(var(--c), var(--c)),
    linear-gradient(var(--c), var(--c)), linear-gradient(var(--c), var(--c)),
    linear-gradient(var(--c), var(--c)), linear-gradient(var(--c), var(--c)),
    linear-gradient(var(--c), var(--c)), linear-gradient(var(--c), var(--c));
  background-repeat: no-repeat;
  background-size: 4px 1px, 1px 4px, 4px 1px, 1px 4px, 4px 1px, 1px 4px, 4px 1px, 1px 4px;
  background-position: 0 0, 0 0, 100% 0, 100% 0, 0 100%, 0 100%, 100% 100%, 100% 100%;
}
.sign-box { position: absolute; top: 8px; width: 161px; height: 40px; display: flex; flex-direction: column; align-items: center; font-family: "Liberation Serif", serif; color: #111; font-size: 12px; }
.sign-box b { line-height: 15px; margin-top: 4px; }
.sign-box i { line-height: 15px; margin-top: 4px; color: #222; }
.sb1 { left: 54px; }
.sb2 { left: 360px; }
.low-box { position: absolute; top: 181px; height: 24px; font: bold 12px/20px "Liberation Serif", serif; text-align: center; color: #111; }
.lb1 { left: 45px; width: 121px; }
.lb2 { left: 236px; width: 121px; }
.lb3 { left: 421px; width: 121px; }

.signed { position: absolute; left: 392px; top: 393px; width: 269px; height: 62px; border: 1px dashed #777; z-index: 3; padding-top: 12px; font: 12px/18.500px "Liberation Serif", serif; }
.signed-logo { position: absolute; left: 66px; top: 2px; width: 60px; height: 57px; background-color: #fff; }
.signed-mark { position: absolute; left: 0; top: 1px; width: 56px; height: 56px; }
.signed-row { display: flex; position: relative; white-space: nowrap; color: #ee1122; font-size: 13px; }
.signed-row i { width: 49px; padding-left: 1px; color: #222; font-size: 12px; }
.red-dash { position: absolute; height: 2px; background-image: repeating-linear-gradient(90deg, #f01010 0 6px, transparent 6px 9px); z-index: 4; }
.rd1 { left: 41px; top: 428px; width: 590px; }
.rd2 { left: 1px; top: 461px; width: 667px; }
.callout { position: absolute; border: 2px solid #ac1e1e; box-shadow: 2px 3px 6px rgba(70,50,50,.45); z-index: 5; }
.co1 { left: 154px; top: 152px; width: 139px; height: 35px; }
.co2 { left: 444px; top: 153px; width: 173px; height: 30px; }

/* status bar */
.status { height: 26px; margin-left: -1px; background: #2b579a; color: #dbe6f4; display: flex; align-items: center; font: 11.300px "Noto Sans", sans-serif; padding-left: 8px; white-space: nowrap; }
.st-units { width: 75px; flex: none; }
.st-up { width: 0; height: 0; border: 3px solid transparent; border-bottom: 4px solid #fff; border-top: 0; flex: none; }
.st-sep { width: 1px; height: 26px; background: #5c80b5; flex: none; }
.sep1 { margin: 0 10px 0 3px; }
.sep2 { margin: 0 7px 0 0; }
.sep3 { margin: 0 4px 0 0; }
.sep4 { margin: 0 8px 0 0; }
.st-play { width: 8px; height: 12px; margin: 0 8px 0 0; flex: none; }
.st-check { width: 89px; flex: none; }
.st-page { width: 40px; flex: none; }
.st-x { width: 43px; flex: none; }
.st-y { width: 152px; flex: none; }
.status .st-ico { width: 14px; height: 14px; margin: 0 9px 0 0; flex: none; }
.status .st-ico-100 { width: 16px; height: 16px; margin: 0; }
.st-zoom { margin-left: 13px; width: 38px; flex: none; }
.st-minus { width: 8px; height: 2px; background: #fff; flex: none; }
.st-slider { width: 96px; height: 1px; margin-left: 4px; background: #6a8dc0; position: relative; flex: none; }
.st-thumb { position: absolute; left: 39px; top: -5px; width: 3px; height: 11px; background: #fff; }
.st-mid { position: absolute; left: 48px; top: -3px; width: 1px; height: 7px; background: #6a8dc0; }
.st-plus { width: 8px; height: 8px; margin-left: 4px; flex: none; background: linear-gradient(#fff, #fff) center / 8px 2px no-repeat, linear-gradient(#fff, #fff) center / 2px 8px no-repeat; }

/* properties panel */
.props { width: 304px; margin-left: 3px; margin-top: 3px; height: 560px; border: 1px solid #c8c8c8; border-bottom: 0; background: #fff; flex: none; display: flex; flex-direction: column; font: 10.200px "Noto Sans", sans-serif; }
.pr-head { height: 25px; display: flex; align-items: flex-start; padding: 1px 6px 0 6px; color: #aaa; font-size: 11px; }
.pr-head span:first-child { flex: 1; }
.pr-pin { width: 8px; height: 10px; margin: 2px 9px 0 0; }
.pr-x { font: 9px/14px "DejaVu Sans", sans-serif; color: #aaa; }
.pr-combo { display: flex; height: 21px; padding-left: 5px; gap: 6px; }
.pr-select { width: 265px; background: #e1e1e1; border: 1px solid #9f9f9f; display: flex; align-items: center; justify-content: space-between; padding: 0 4px 0 3px; font-size: 11.500px; color: #222; }
.pr-chev { width: 10px; height: 6px; }
.pr-sortbtn { width: 22px; border: 1px solid #aaa; display: flex; align-items: center; justify-content: center; gap: 1px; }
.az { display: flex; flex-direction: column; font: bold 8px/8px "Liberation Sans", sans-serif; color: #7a5fb5; }
.az em { font-style: normal; }
.az2 em:first-child { color: #3d68a5; }
.az2 em:last-child { color: #9a3b3b; }
.az-arrow { width: 6px; height: 16px; }
.pr-tools { height: 24px; margin-top: 7px; padding-left: 3px; display: flex; align-items: center; }
.pt { width: 23px; height: 21px; display: flex; align-items: center; justify-content: center; gap: 1px; margin-right: 1px; }
.pt-on { background: #cde4f7; border: 1px solid #7eb4ea; }
.pt-ico { width: 15px; height: 14px; }
.pt-wide { width: 16px; height: 16px; }
.pt-sep { width: 1px; height: 21px; background: #888; margin: 0 3px 0 2px; }
.pr-grid { height: 388px; margin: 2px 2px 0 2px; border: 1px solid #aaa; display: flex; overflow: hidden; background: #eee; }
.pr-rows { width: 282px; background: #eee; }
.row { height: 16px; display: flex; margin-left: 22px; background: #fff; border-bottom: 2px solid #efefef; position: relative; line-height: 14px; white-space: nowrap; color: #222; }
.n { width: 106px; padding-left: 3px; border-right: 2px solid #efefef; overflow: hidden; flex: none; }
.v { padding-left: 3px; overflow: hidden; flex: 1; }
.vb { font-weight: bold; }
.v-style { display: flex; align-items: center; padding-left: 1px; }
.swatch { width: 20px; height: 12px; border: 1px solid #000; margin-right: 9px; flex: none; background: linear-gradient(#000, #000) center / 10px 5px no-repeat; }
.cat { height: 16px; display: flex; align-items: center; font-weight: bold; color: #222; background: #efefef; padding-left: 25px; position: relative; font-size: 10.500px; }
.chev { position: absolute; left: 6px; top: 5px; width: 10px; height: 6px; }
.chev-r { position: absolute; left: -15px; top: 3px; width: 6px; height: 10px; }
.pr-scroll { width: 15px; background: #f1f1f1; position: relative; }
.ps-chev { position: absolute; left: 3px; top: 7px; width: 9px; height: 6px; }
.ps-down { top: 376px; }
.ps-thumb { position: absolute; left: 0; top: 146px; width: 15px; height: 208px; background: #c8c8c8; }
.pr-desc { height: 59px; margin: 4px 2px 0 2px; border: 1px solid #aaa; padding: 3px 5px; display: flex; flex-direction: column; line-height: 15px; color: #222; }
.pr-tabs { height: 27px; margin-top: 2px; display: flex; align-items: stretch; padding-left: 1px; font-size: 10.300px; color: #333; }
.prt { display: flex; align-items: center; flex: none; }
.prt-on { width: 83px; padding-left: 5px; gap: 7px; border-right: 1px solid #ccc; border-bottom: 2px solid #2b579a; color: #2b579a; height: 25px; }
.prt-ico { width: 15px; height: 15px; flex: none; }
.prt-dict { margin-left: 6px; gap: 9px; width: 68px; }
.prt-tree { margin-left: 13px; gap: 8px; }
```
